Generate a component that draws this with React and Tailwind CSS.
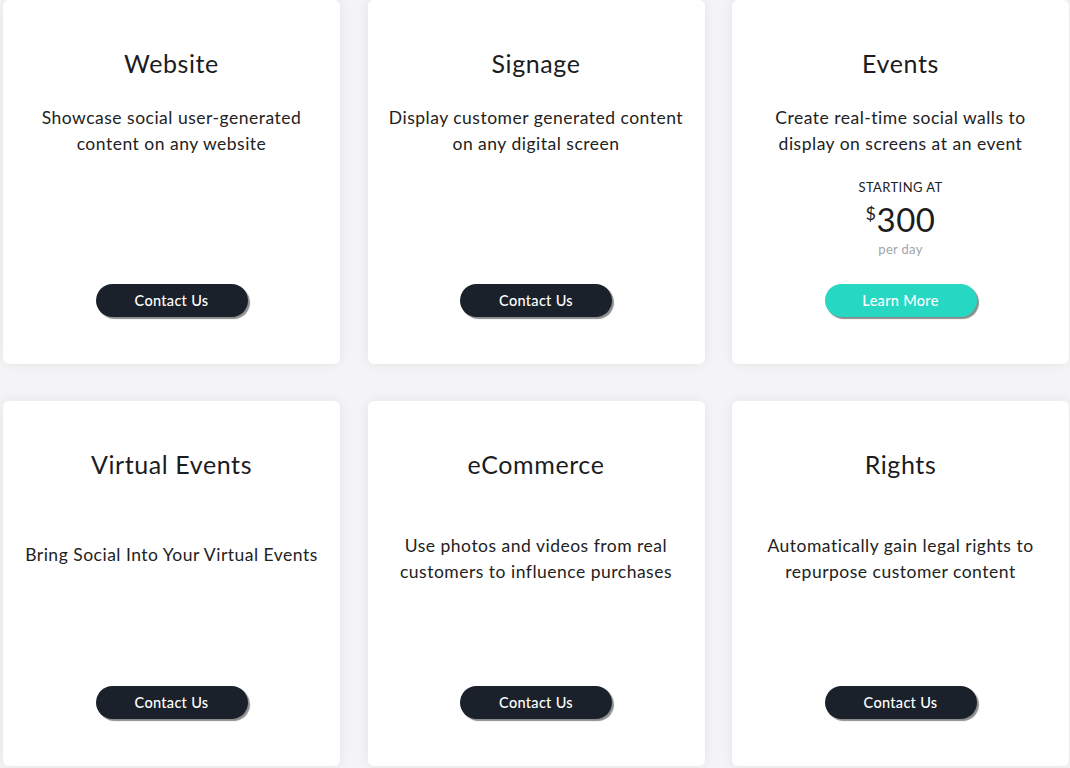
import React from "react";

const font = { fontFamily: "Lato, 'Noto Sans', sans-serif" };

function Btn({ label, teal }) {
  return (
    <button
      className={
        teal
          ? "w-[152px] h-[33px] rounded-full bg-[#26d8c2] text-white text-[14.5px] font-medium tracking-[0.3px] shadow-[2px_2px_1px_rgba(0,0,0,0.45)]"
          : "w-[152px] h-[33px] rounded-full bg-[#1b212a] text-white text-[14.5px] font-medium tracking-[0.3px] shadow-[2px_2px_1px_rgba(0,0,0,0.45)]"
      }
    >
      {label}
    </button>
  );
}

function Card({ title, lines, descClass, pricing, teal }) {
  return (
    <div className="bg-white rounded-[6px] shadow-[0_0_12px_rgba(0,0,0,0.07)] flex flex-col items-center text-center text-[#1c1c1e]">
      <div className="mt-[47px] h-[32px] leading-[32px] text-[25px] font-normal tracking-[0.6px]">{title}</div>
      <div className={descClass + " text-[17.5px] leading-[26px] tracking-[0.5px] text-[#222]"}>
        {lines.map((l, i) => (
          <div key={i} className="whitespace-nowrap">{l}</div>
        ))}
      </div>
      {pricing && (
        <div className="mt-[22px] flex flex-col items-center">
          <div className="text-[13px] leading-[16px] tracking-[0.4px] text-[#222]">STARTING AT</div>
          <div className="text-[33px] leading-[38px] -mt-[1px] tracking-[0.5px] text-[#1c1c1e]">
            <span className="text-[18px] align-[12px]">$</span>300
          </div>
          <div className="text-[13px] leading-[18px] tracking-[0.3px] text-[#a3a3a8] mt-[2px]">per day</div>
        </div>
      )}
      <div className="flex-1" />
      <div className="mb-[47px]">
        <Btn label={teal ? "Learn More" : "Contact Us"} teal={teal} />
      </div>
    </div>
  );
}

export default function App() {
  return (
    <div style={font} className="w-[1070px] h-[768px] bg-[#f4f4f6] overflow-hidden pl-[3px]">
      <div className="grid grid-cols-[337px_337px_337px] gap-x-[27.5px] grid-rows-[364px_365px] gap-y-[37px]">
        <Card title="Website" lines={["Showcase social user-generated", "content on any website"]} descClass="mt-[26px]" />
        <Card title="Signage" lines={["Display customer generated content", "on any digital screen"]} descClass="mt-[26px]" />
        <Card title="Events" lines={["Create real-time social walls to", "display on screens at an event"]} descClass="mt-[26px]" pricing teal />
        <Card title="Virtual Events" lines={["Bring Social Into Your Virtual Events"]} descClass="mt-[62px]" />
        <Card title="eCommerce" lines={["Use photos and videos from real", "customers to influence purchases"]} descClass="mt-[53px]" />
        <Card title="Rights" lines={["Automatically gain legal rights to", "repurpose customer content"]} descClass="mt-[53px]" />
      </div>
    </div>
  );
}
